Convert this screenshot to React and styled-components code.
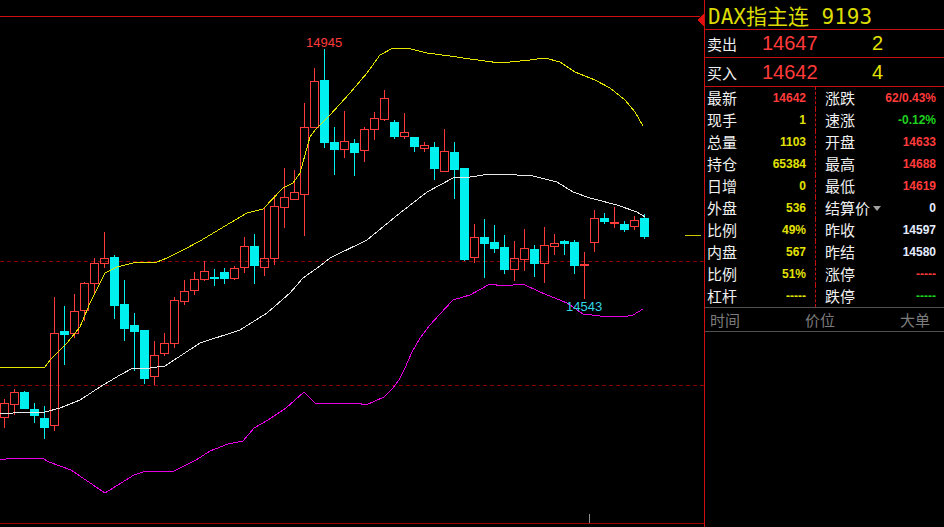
import React from "react";
import styled, { createGlobalStyle } from "styled-components";

const GlobalStyle = createGlobalStyle`
  html, body {
    margin: 0;
    padding: 0;
    background: #000;
  }
`;

// candles: [high, bodyTop, bodyBottom, low, up]  (pixel y, x = 4 + 10 * index)
const candles = [
  [399, 403, 417, 427, 1], [389, 392, 404, 414, 1], [391, 392, 408, 408, 0], [403, 409, 415, 422, 0],
  [406, 418, 427, 438, 0], [297, 333, 425, 430, 1], [306, 331, 334, 364, 0], [294, 311, 333, 337, 1],
  [282, 283, 310, 320, 1], [258, 263, 283, 293, 1], [232, 258, 263, 267, 1], [255, 257, 305, 318, 0],
  [280, 304, 328, 340, 0], [313, 325, 331, 370, 0], [330, 330, 378, 383, 0], [341, 355, 376, 384, 1],
  [333, 343, 353, 355, 1], [297, 300, 343, 347, 1], [280, 291, 301, 304, 1], [272, 279, 290, 294, 1],
  [261, 271, 279, 280, 1], [269, 277, 277, 285, 0], [268, 272, 278, 283, 0], [266, 268, 278, 279, 1],
  [237, 246, 267, 272, 1], [234, 246, 265, 283, 0], [208, 258, 267, 275, 1], [195, 206, 258, 264, 1],
  [168, 197, 207, 227, 1], [170, 192, 199, 199, 1], [103, 127, 194, 235, 1], [68, 81, 127, 127, 1],
  [49, 80, 142, 147, 0], [127, 142, 149, 174, 0], [111, 141, 149, 157, 1], [139, 143, 152, 175, 0],
  [127, 129, 150, 161, 1], [112, 118, 129, 139, 1], [90, 98, 119, 120, 1], [120, 122, 136, 138, 0],
  [113, 132, 136, 138, 1], [137, 137, 146, 151, 0], [142, 145, 148, 151, 1], [142, 147, 168, 179, 0],
  [129, 151, 171, 171, 1], [142, 152, 169, 198, 0], [168, 168, 259, 260, 0], [224, 237, 257, 262, 1],
  [219, 237, 243, 277, 0], [225, 242, 248, 252, 0], [235, 247, 269, 273, 0], [241, 258, 269, 280, 1],
  [229, 248, 259, 270, 1], [245, 249, 263, 276, 0], [227, 245, 263, 282, 1], [234, 243, 246, 254, 1],
  [240, 241, 243, 254, 0], [240, 242, 265, 273, 0], [252, 264, 264, 298, 1], [210, 218, 242, 251, 1],
  [213, 218, 221, 223, 0], [207, 222, 222, 227, 1], [221, 224, 229, 231, 0], [216, 220, 226, 229, 1],
  [214, 218, 236, 238, 0],
];

const upper =
  "0,368 28,367 45,367 50,360 67,343 80,327 90,303 100,283 105,273 117,267 133,263 157,262 167,258 183,250 200,241 230,223 247,213 263,209 283,188 293,183 300,173 310,137 315,130 330,115 350,93 367,73 380,55 393,48 407,48 427,53 450,56 470,59 500,63 530,60 545,58 560,62 575,72 595,80 610,88 625,100 635,112 643,126";
const middle =
  "0,414 13,413 45,412 60,408 80,400 100,387 120,375 133,368 150,368 165,366 200,343 240,330 267,313 290,293 303,278 320,266 330,258 367,240 400,213 427,192 453,178 470,177 490,174 517,175 533,176 557,182 573,192 590,198 617,205 637,212 645,217";
const lower =
  "0,460 13,458 42,458 49,462 71,470 105,493 134,475 143,472 174,471 196,460 210,451 228,444 243,441 254,428 268,420 286,408 304,392 315,403 357,403 366,405 384,397 393,388 399,380 405,368 412,352 420,338 430,325 440,314 453,300 470,295 490,284 503,286 523,284 540,292 567,303 583,314 600,316 623,317 633,315 643,309";

const RED = "#ff3b3b";
const CYAN = "#00efef";

function Candle({ c, i }) {
  const [h, t, b, l, up] = c;
  const x = 4 + i * 10;
  if (t === b) {
    const col = up ? RED : CYAN;
    return (
      <g>
        <line x1={x + 0.5} x2={x + 0.5} y1={h} y2={l + 1} stroke={col} />
        <rect x={x - 4} y={t} width={9} height={2} fill={col} />
      </g>
    );
  }
  if (up) {
    return (
      <g stroke={RED} fill="none">
        {h < t && <line x1={x + 0.5} x2={x + 0.5} y1={h} y2={t} />}
        {l > b && <line x1={x + 0.5} x2={x + 0.5} y1={b + 1} y2={l + 1} />}
        <rect x={x - 3.5} y={t + 0.5} width={8} height={b - t} />
      </g>
    );
  }
  return (
    <g>
      <line x1={x + 0.5} x2={x + 0.5} y1={h} y2={l + 1} stroke={CYAN} />
      <rect x={x - 4} y={t} width={9} height={b - t + 1} fill={CYAN} />
    </g>
  );
}

function KChart() {
  return (
    <Chart width="704" height="527" shapeRendering="crispEdges">
      <line x1="0" x2="700" y1="16.5" y2="16.5" stroke="#d01010" />
      <polygon points="697,20 704,14 704,27" fill="#e01010" />
      <line x1="0" x2="704" y1="261.5" y2="261.5" stroke="#8a0000" strokeDasharray="4 3" />
      <line x1="0" x2="704" y1="385.5" y2="385.5" stroke="#8a0000" strokeDasharray="4 3" />
      <line x1="0" x2="704" y1="523.5" y2="523.5" stroke="#a00000" />
      <line x1="589.5" x2="589.5" y1="514" y2="523" stroke="#909090" />
      <line x1="685" x2="701" y1="235.5" y2="235.5" stroke="#c8c800" />
      {candles.map((c, i) => (
        <Candle key={i} c={c} i={i} />
      ))}
      <polyline points={upper} fill="none" stroke="#e6e600" />
      <polyline points={middle} fill="none" stroke="#e8e8e8" />
      <polyline points={lower} fill="none" stroke="#e600e6" />
      <ChartLabel x="306" y="47" fill={RED}>14945</ChartLabel>
      <ChartLabel x="566" y="311" fill="#33d6e6">14543</ChartLabel>
    </Chart>
  );
}

const rows = [
  ["最新", "14642", "red", "涨跌", "62/0.43%", "red"],
  ["现手", "1", "yellow", "速涨", "-0.12%", "green"],
  ["总量", "1103", "yellow", "开盘", "14633", "red"],
  ["持仓", "65384", "yellow", "最高", "14688", "red"],
  ["日增", "0", "yellow", "最低", "14619", "red"],
  ["外盘", "536", "yellow", "结算价", "0", "white"],
  ["比例", "49%", "yellow", "昨收", "14597", "white"],
  ["内盘", "567", "yellow", "昨结", "14580", "white"],
  ["比例", "51%", "yellow", "涨停", "-----", "red"],
  ["杠杆", "-----", "yellow", "跌停", "-----", "green"],
];

const tones = {
  red: "#ff3b3b",
  yellow: "#e2e200",
  green: "#1ed21e",
  white: "#e4ecff",
};

export default function App() {
  return (
    <>
      <GlobalStyle />
      <Page>
        <ChartArea>
          <KChart />
        </ChartArea>
        <Panel>
          <TitleRow>DAX指主连 9193</TitleRow>
          <QuoteRow>
            <QLabel>卖出</QLabel>
            <QPrice>14647</QPrice>
            <QVol>2</QVol>
          </QuoteRow>
          <QuoteRow $last>
            <QLabel>买入</QLabel>
            <QPrice>14642</QPrice>
            <QVol>4</QVol>
          </QuoteRow>
          <Grid>
            {rows.map((r, i) => (
              <React.Fragment key={i}>
                <Cell $left>
                  <Label>{r[0]}</Label>
                  <Value $tone={r[2]}>{r[1]}</Value>
                </Cell>
                <Cell>
                  <Label>
                    {r[3]}
                    {r[3] === "结算价" && <Caret />}
                  </Label>
                  <Value $tone={r[5]}>{r[4]}</Value>
                </Cell>
              </React.Fragment>
            ))}
          </Grid>
          <Header>
            <span>时间</span>
            <span>价位</span>
            <span>大单</span>
          </Header>
        </Panel>
      </Page>
    </>
  );
}

const Page = styled.div`
  display: flex;
  width: 944px;
  height: 527px;
  background: #000;
  overflow: hidden;
  font-family: "Noto Sans CJK SC", "Liberation Sans", sans-serif;
`;

const ChartArea = styled.div`
  width: 704px;
  height: 527px;
  flex: none;
`;

const Chart = styled.svg`
  display: block;
`;

const ChartLabel = styled.text`
  font-family: "Liberation Sans", sans-serif;
  font-size: 13px;
`;

const Panel = styled.div`
  flex: 1;
  display: flex;
  flex-direction: column;
  border-left: 1px solid #d01010;
`;

const TitleRow = styled.div`
  height: 29px;
  border-bottom: 1px solid #c81010;
  padding-left: 3px;
  display: flex;
  align-items: center;
  color: #dcdc00;
  font-family: "DejaVu Sans Mono", "Noto Sans CJK SC", monospace;
  font-size: 21px;
  white-space: pre;
`;

const QuoteRow = styled.div`
  height: ${(p) => (p.$last ? 28 : 27)}px;
  border-bottom: 1px solid #c81010;
  display: grid;
  grid-template-columns: 57px 110px 1fr;
  align-items: center;
`;

const QLabel = styled.span`
  color: #f0f0f0;
  font-size: 15px;
  padding-left: 2px;
`;

const QPrice = styled.span`
  color: #ff3b3b;
  font-family: "Liberation Sans", sans-serif;
  font-size: 20px;
`;

const QVol = styled.span`
  color: #e2e200;
  font-family: "Liberation Sans", sans-serif;
  font-size: 20px;
`;

const Grid = styled.div`
  display: grid;
  grid-template-columns: 111px 1fr;
  grid-auto-rows: 22px;
  border-bottom: 1px solid #505050;
`;

const Cell = styled.div`
  display: flex;
  align-items: center;
  justify-content: space-between;
  padding: ${(p) => (p.$left ? "0 9px 0 2px" : "0 8px 0 9px")};
  border-right: ${(p) => (p.$left ? "1px dashed #c81010" : "none")};
`;

const Label = styled.span`
  display: flex;
  align-items: center;
  color: #f0f0f0;
  font-size: 15px;
  line-height: 22px;
`;

const Caret = styled.i`
  margin-left: 3px;
  width: 0;
  height: 0;
  border-left: 4px solid transparent;
  border-right: 4px solid transparent;
  border-top: 5px solid #a0a0a0;
`;

const Value = styled.span`
  color: ${(p) => tones[p.$tone]};
  font-family: "Liberation Sans", sans-serif;
  font-weight: bold;
  font-size: 12px;
`;

const Header = styled.div`
  height: 23px;
  border-bottom: 1px solid #505050;
  display: flex;
  align-items: center;
  justify-content: space-between;
  padding: 0 14px 0 5px;
  color: #7c7c7c;
  font-size: 15px;
`;
